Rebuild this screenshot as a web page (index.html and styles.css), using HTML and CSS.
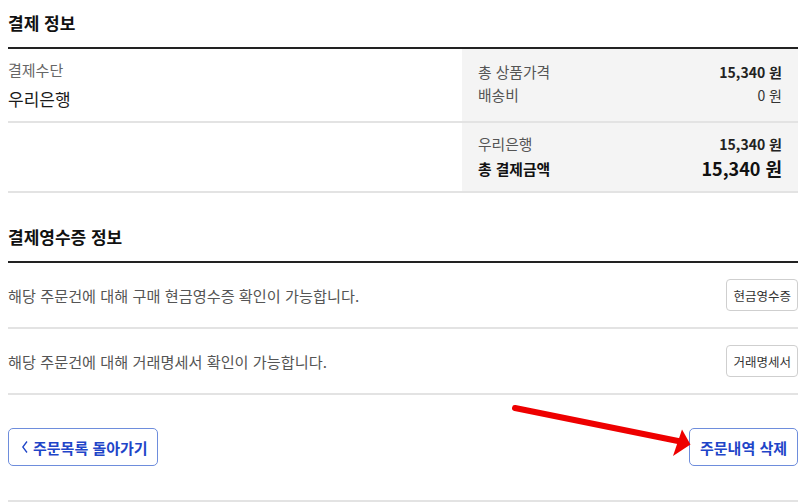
FILE: index.html
```html
<!DOCTYPE html>
<html lang="ko">
<head>
<meta charset="utf-8">
<title>결제 정보</title>
<link rel="stylesheet" href="styles.css">
</head>
<body>
<div class="page">
  <section class="pay">
    <h2 class="sec-title">결제 정보</h2>
    <div class="pay-row pay-row-1">
      <div class="pay-left">
        <div class="method-label">결제수단</div>
        <div class="method-value">우리은행</div>
      </div>
      <div class="pay-right">
        <div class="line"><span class="lbl">총 상품가격</span><span class="val">15,340 원</span></div>
        <div class="line"><span class="lbl">배송비</span><span class="val light">0 원</span></div>
      </div>
    </div>
    <div class="pay-row pay-row-2">
      <div class="pay-left"></div>
      <div class="pay-right">
        <div class="line"><span class="lbl">우리은행</span><span class="val">15,340 원</span></div>
        <div class="line total"><span class="lbl">총 결제금액</span><span class="val">15,340 원</span></div>
      </div>
    </div>
  </section>

  <section class="receipt">
    <h2 class="sec-title sec-title-2">결제영수증 정보</h2>
    <div class="rc-row">
      <p class="rc-text">해당 주문건에 대해 구매 현금영수증 확인이 가능합니다.</p>
      <button class="small-btn">현금영수증</button>
    </div>
    <div class="rc-row">
      <p class="rc-text">해당 주문건에 대해 거래명세서 확인이 가능합니다.</p>
      <button class="small-btn">거래명세서</button>
    </div>
  </section>

  <div class="actions">
    <button class="blue-btn back-btn">
      <svg class="chev" width="6" height="12" viewBox="0 0 6 12"><polyline points="5,0.5 0.8,6 5,11.5" fill="none" stroke="#1f45c8" stroke-width="1.3"/></svg>
      <span>주문목록 돌아가기</span>
    </button>
    <button class="blue-btn del-btn">주문내역 삭제</button>
  </div>

  <svg class="arrow" width="800" height="502" viewBox="0 0 800 502">
    <line x1="515" y1="408" x2="678" y2="441" stroke="#ee0000" stroke-width="6" stroke-linecap="round"/>
    <polygon points="682,429.5 673,456 690.5,444.5" fill="#ee0000"/>
  </svg>
</div>
</body>
</html>
```

FILE: styles.css
```css
html, body {
  margin: 0;
  padding: 0;
  background: #fff;
}
body {
  font-family: "Noto Sans CJK KR", "Noto Sans", sans-serif;
  color: #222;
}
.page {
  position: relative;
  width: 790px;
  height: 502px;
  padding: 0 2px 0 8px;
  overflow: hidden;
}
.sec-title {
  margin: 0;
  padding: 12px 0 13px;
  font-size: 17px;
  line-height: 22px;
  font-weight: 700;
  color: #111;
  border-bottom: 2px solid #222;
}
.sec-title-2 {
  padding-top: 33px;
}
.pay-row {
  display: grid;
  grid-template-columns: 454px 1fr;
  border-bottom: 2px solid #e3e3e3;
}
.pay-row-1 { height: 72px; }
.pay-row-2 { height: 68px; }
.pay-left {
  padding-top: 10px;
}
.method-label {
  font-size: 15px;
  line-height: 22px;
  color: #666;
}
.method-value {
  margin-top: 4px;
  font-size: 17px;
  line-height: 28px;
  color: #1a1a1a;
}
.pay-right {
  background: #f4f4f4;
  padding: 11px 16px 0 16px;
}
.pay-row-2 .pay-right {
  padding-top: 9px;
}
.line {
  display: flex;
  justify-content: space-between;
  align-items: center;
  height: 23px;
  font-size: 14px;
}
.lbl {
  font-size: 14.8px;
  color: #555;
}
.val {
  font-weight: 700;
  color: #222;
}
.val.light {
  font-weight: 400;
  color: #333;
}
.line.total {
  height: 26px;
}
.line.total .lbl {
  font-weight: 700;
  color: #111;
}
.line.total .val {
  font-size: 18px;
  color: #111;
}
.rc-row {
  display: flex;
  align-items: center;
  justify-content: space-between;
  height: 64px;
  border-bottom: 2px solid #e3e3e3;
}
.rc-text {
  margin: 0;
  font-size: 15.2px;
  color: #555;
}
.small-btn {
  height: 32px;
  padding: 0 6px;
  font-family: inherit;
  font-size: 12.5px;
  color: #333;
  background: #fff;
  border: 1px solid #cfcfcf;
  border-radius: 4px;
}
.actions {
  display: flex;
  justify-content: space-between;
  align-items: center;
  padding: 33px 0 34px;
  border-bottom: 2px solid #e3e3e3;
}
.blue-btn {
  display: flex;
  align-items: center;
  height: 38px;
  font-family: inherit;
  font-size: 15px;
  font-weight: 700;
  color: #1f45c8;
  background: #fff;
  border: 1px solid #6e8ddc;
  border-radius: 5px;
}
.back-btn {
  width: 150px;
  padding: 0 0 0 13px;
  gap: 5px;
}
.chev {
  display: block;
}
.del-btn {
  width: 109px;
  justify-content: center;
  padding: 0;
}
.arrow {
  position: absolute;
  left: 0;
  top: 0;
  pointer-events: none;
}
```
